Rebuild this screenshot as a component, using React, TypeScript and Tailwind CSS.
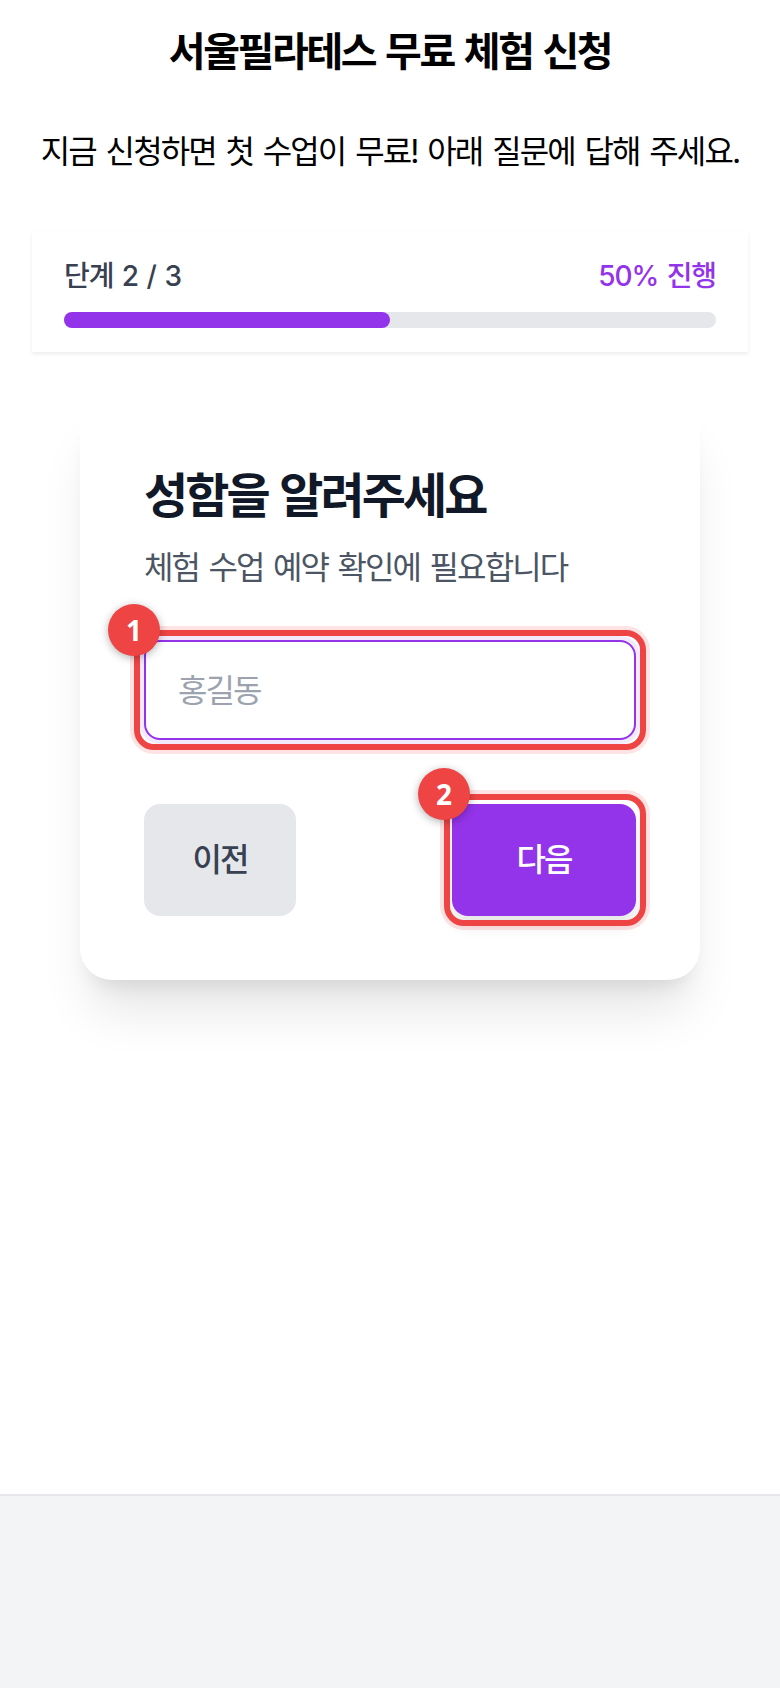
const font = "font-['Inter','Noto_Sans_CJK_KR',sans-serif]";

const Badge = ({ n }: { n: number }) => (
  <span className="absolute -left-[26px] -top-[26px] z-10 flex h-[52px] w-[52px] items-center justify-center rounded-full bg-[#ef4444] text-[28px] font-bold text-white shadow-[0_2px_8px_rgba(0,0,0,0.3)] font-['Noto_Sans',sans-serif]">
    {n}
  </span>
);

const Highlight = ({ n, box }: { n: number; box: string }) => (
  <div className={`pointer-events-none absolute rounded-[20px] border-[6px] border-[#ef4444] shadow-[0_0_0_4px_rgba(239,68,68,0.15)] ${box}`}>
    <div className="absolute left-[-6px] top-[-6px]">
      <Badge n={n} />
    </div>
  </div>
);

export default function App() {
  return (
    <div className={`flex min-h-[1688px] flex-col bg-white text-black ${font}`}>
      <main className="flex-1 px-8">
        <h1 className="mt-6 text-center text-[40px] font-bold leading-[56px] tracking-[-0.06em] [word-spacing:0.07em]">
          서울필라테스 무료 체험 신청
        </h1>
        <p className="mt-12 text-center text-[32px] leading-[48px] tracking-[-0.06em] [word-spacing:0.085em] whitespace-nowrap">
          지금 신청하면 첫 수업이 무료! 아래 질문에 답해 주세요.
        </p>

        <section className="mt-14 bg-white px-8 py-6 shadow-[0_2px_4px_rgba(0,0,0,0.08)]">
          <div className="mb-4 flex h-10 items-center justify-between text-[28px] font-medium tracking-[-0.04em] [word-spacing:0.08em]">
            <span className="text-[#374151]">단계 2 / 3</span>
            <span className="text-[#9333ea]">50% 진행</span>
          </div>
          <div className="h-4 rounded-full bg-[#e5e7eb]">
            <div className="h-4 w-1/2 rounded-full bg-[#9333ea]" />
          </div>
        </section>

        <section className="mx-12 mt-12 rounded-[32px] bg-white p-16 shadow-[0_40px_50px_-10px_rgba(0,0,0,0.1),0_16px_20px_-12px_rgba(0,0,0,0.1)]">
          <h2 className="text-[48px] font-bold leading-[64px] tracking-[-0.06em] [word-spacing:0.06em] text-[#111827]">성함을 알려주세요</h2>
          <p className="mt-4 text-[32px] leading-[48px] tracking-[-0.06em] [word-spacing:0.075em] text-[#4b5563]">체험 수업 예약 확인에 필요합니다</p>

          <div className="relative mt-12 h-[100px]">
            <input
              placeholder="홍길동"
              className="h-full w-full rounded-2xl border-2 border-[#9333ea] bg-white px-8 text-[32px] tracking-[-0.06em] shadow-[0_0_0_4px_rgba(147,51,234,0.1)] outline-none placeholder:text-[#9ca3af]"
            />
            <Highlight n={1} box="-inset-[10px]" />
          </div>

          <div className="mt-16 flex justify-between">
            <button className="h-[112px] w-[152px] rounded-2xl bg-[#e5e7eb] text-[32px] font-medium tracking-[-0.06em] text-[#374151]">
              이전
            </button>
            <div className="relative">
              <button className="h-[112px] w-[184px] rounded-2xl bg-[#9333ea] text-[32px] font-medium tracking-[-0.06em] text-white shadow-[0_10px_15px_rgba(0,0,0,0.1)]">
                다음
              </button>
              <Highlight n={2} box="-left-2 -right-[10px] -top-[10px] -bottom-[10px]" />
            </div>
          </div>
        </section>
      </main>
      <footer className="h-[194px] border-t-2 border-[#e5e7eb] bg-[#f3f4f6]" />
    </div>
  );
}
